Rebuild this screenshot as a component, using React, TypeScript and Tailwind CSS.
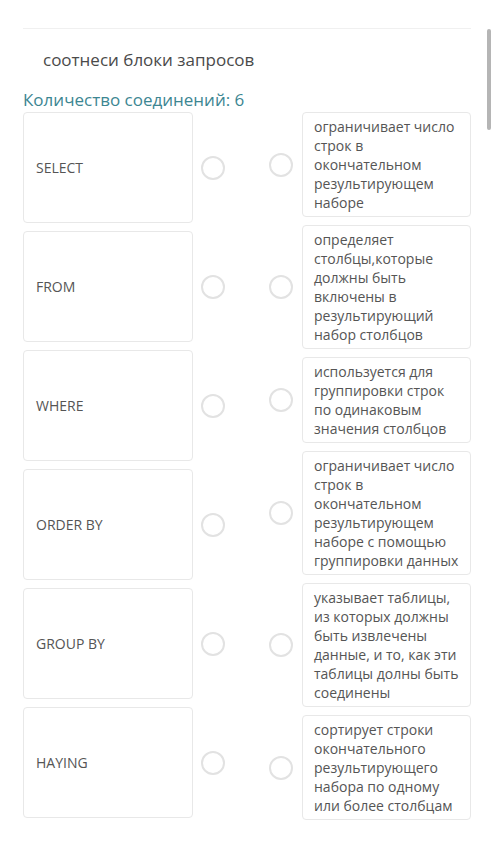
const leftItems = ['SELECT', 'FROM', 'WHERE', 'ORDER BY', 'GROUP BY', 'HAYING'];

const rightItems = [
  'ограничивает число строк в окончательном результирующем наборе',
  'определяет столбцы,которые должны быть включены в результирующий набор столбцов',
  'используется для группировки строк по одинаковым значения столбцов',
  'ограничивает число строк в окончательном результирующем наборе с помощью группировки данных',
  'указывает таблицы, из которых должны быть извлечены данные, и то, как эти таблицы долны быть соединены',
  'сортирует строки окончательного результирующего набора по одному или более столбцам',
];

function Dot() {
  return (
    <span className="block h-[24px] w-[24px] shrink-0 rounded-full border-2 border-[#e2e2e2] bg-white" />
  );
}

export default function App() {
  return (
    <div
      className="relative min-h-[856px] w-[500px] bg-white text-[#555]"
      style={{ fontFamily: '"Open Sans", "Noto Sans", sans-serif' }}
    >
      {/* scroll indicator */}
      <div className="absolute right-[9px] top-[29px] h-[101px] w-[4px] rounded-full bg-[#b5b5b5]" />

      <div className="px-[23px] pt-[28px]">
        <div className="mr-[6px] border-t border-[#f0f0f0]" />
        <h2 className="mt-[19px] pl-[20px] text-[17px] leading-[24px] text-[#4a4a4a]">
          соотнеси блоки запросов
        </h2>
        <p className="mt-[16px] text-[17px] leading-[24px] text-[#3c8692]">
          Количество соединений: 6
        </p>

        <div className="mt-[0px] flex">
          <div className="flex flex-col gap-[8px]">
            {leftItems.map((item) => (
              <div key={item} className="flex items-center">
                <div className="flex h-[111px] w-[170px] items-center rounded-[4px] border border-[#e8e8e8] px-[12px] text-[14px]">
                  {item}
                </div>
                <span className="ml-[8px]">
                  <Dot />
                </span>
              </div>
            ))}
          </div>

          <div className="ml-[44px] flex flex-col gap-[8px]">
            {rightItems.map((item, i) => (
              <div key={i} className="flex items-center">
                <Dot />
                <div className="ml-[9px] w-[169px] rounded-[4px] border border-[#e8e8e8] py-[4px] pl-[11px] pr-[8px] text-[14px] leading-[19px]">
                  {item}
                </div>
              </div>
            ))}
          </div>
        </div>
      </div>
    </div>
  );
}
